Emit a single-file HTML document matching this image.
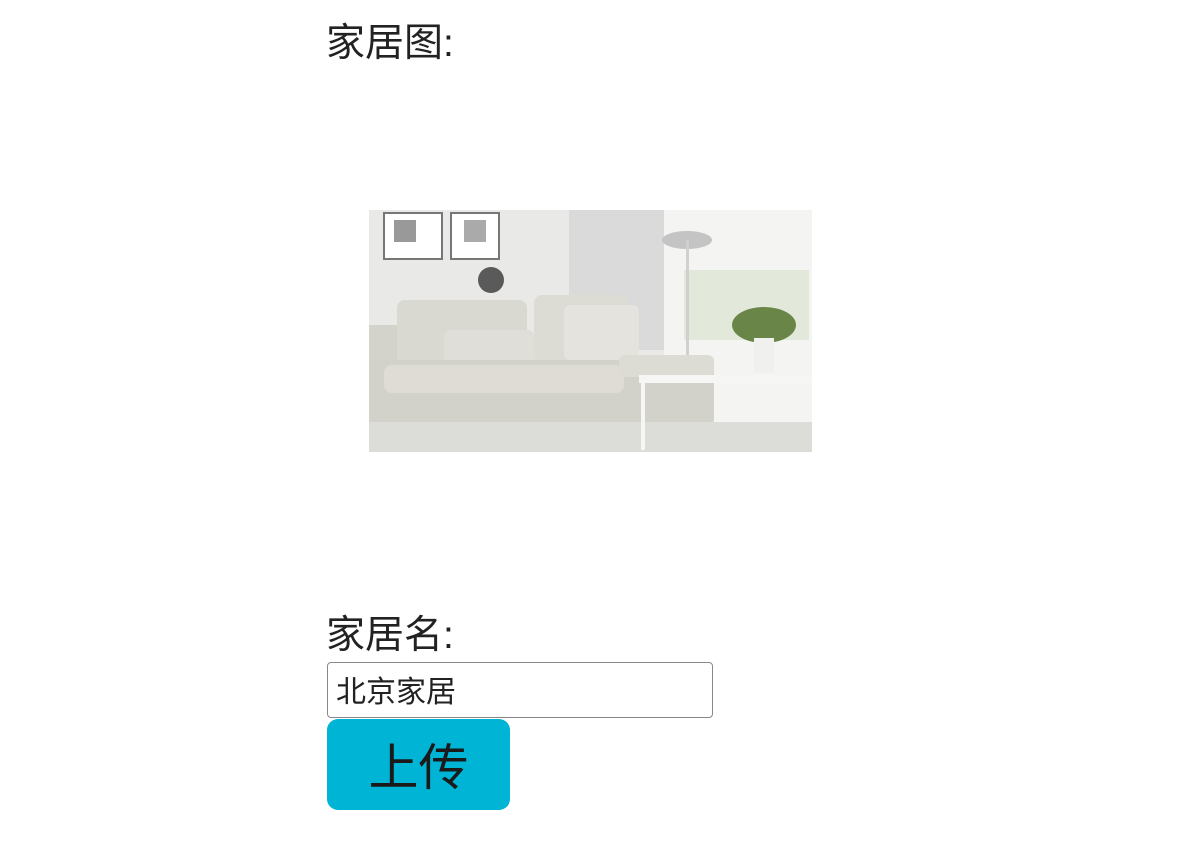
<!DOCTYPE html>
<html><head><meta charset="utf-8"><style>
body{margin:0;background:#fff;width:1190px;height:842px;overflow:hidden;position:relative;font-family:"Liberation Sans","Noto Sans CJK SC",sans-serif;color:#222}
.t{position:absolute;left:326px;font-size:39px;line-height:44px}
.inp{position:absolute;left:327px;top:662px;border:1.5px solid #888;border-radius:4px;font-size:30px;line-height:60px;padding-left:8px;box-sizing:border-box;width:386px;height:56px}
.btn{position:absolute;left:327px;top:719px;width:183px;height:91px;background:#00b4d6;border-radius:11px;font-size:50px;line-height:98px;text-align:center;color:#1a1a1a}
svg{position:absolute;left:369px;top:210px}
</style></head><body>
<div class="t" style="top:22px">家居图:</div>
<svg width="443" height="242" viewBox="0 0 443 242">
<rect width="443" height="242" fill="#e9e9e7"/>
<rect x="200" y="0" width="100" height="140" fill="#dadada"/>
<rect x="295" y="0" width="148" height="242" fill="#f4f5f2"/>
<rect x="315" y="60" width="125" height="70" fill="#e2e8da"/>
<rect x="15" y="3" width="58" height="46" fill="#fff" stroke="#777" stroke-width="2"/>
<rect x="82" y="3" width="48" height="46" fill="#fff" stroke="#777" stroke-width="2"/>
<rect x="25" y="10" width="22" height="22" fill="#999"/>
<rect x="95" y="10" width="22" height="22" fill="#aaa"/>
<circle cx="122" cy="70" r="13" fill="#5a5a5a"/>
<ellipse cx="318" cy="30" rx="25" ry="9" fill="#c4c4c4"/>
<rect x="317" y="30" width="3" height="120" fill="#d0d0d0"/>
<rect x="0" y="115" width="30" height="100" fill="#d3d2cb"/>
<rect x="28" y="90" width="130" height="75" rx="8" fill="#d9d8d1"/>
<rect x="165" y="85" width="95" height="70" rx="8" fill="#dcdbd4"/>
<rect x="195" y="95" width="75" height="55" rx="6" fill="#e4e3dd"/>
<rect x="75" y="120" width="90" height="40" rx="6" fill="#dfded8"/>
<rect x="0" y="150" width="345" height="65" rx="6" fill="#d2d1ca"/>
<rect x="15" y="155" width="240" height="28" rx="8" fill="#dedcd5"/>
<rect x="250" y="145" width="95" height="22" rx="6" fill="#dcdbd4"/>
<rect x="0" y="212" width="443" height="30" fill="#dcdcd9"/>
<ellipse cx="395" cy="115" rx="32" ry="18" fill="#6a8548"/>
<rect x="385" y="128" width="20" height="35" fill="#f0f0ee"/>
<rect x="270" y="165" width="173" height="8" fill="#f6f6f4"/>
<rect x="272" y="170" width="4" height="70" fill="#f6f6f4"/>
</svg>
<div class="t" style="top:614px">家居名:</div>
<div class="inp">北京家居</div>
<div class="btn">上传</div>
</body></html>
